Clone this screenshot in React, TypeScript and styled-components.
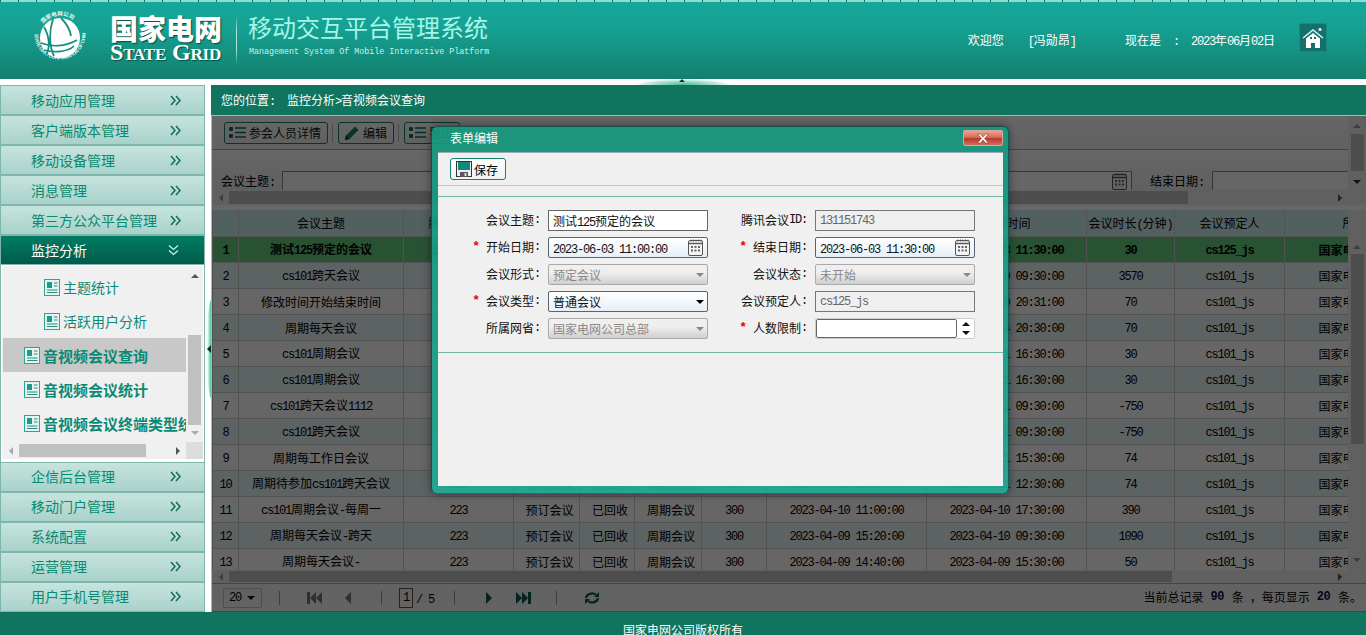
import React from "react";
import styled, { createGlobalStyle } from "styled-components";

const Global = createGlobalStyle`
  html, body { margin: 0; padding: 0; overflow: hidden; background: #fff; }
  body { font-family: "Noto Sans CJK SC", "Liberation Sans", sans-serif; font-size: 12px; color: #000; }
  * { box-sizing: border-box; }
`;

const Page = styled.div`display: flex; flex-direction: column; width: 1366px; height: 635px; overflow: hidden;`;

/* ---- text helper: half width latin runs next to CJK ---- */
const Latin = styled.span`font-family: "Liberation Mono", monospace; font-size: 1em; letter-spacing: -0.1em;`;
const Txt = ({ children }: { children: string }) => (
  <>
    {children.split(/([\x20-\x7e]+)/).filter(Boolean).map((run, i) =>
      /^[\x20-\x7e]+$/.test(run) ? <Latin key={i}>{run}</Latin> : <span key={i}>{run}</span>
    )}
  </>
);

/* ---- header ---- */
const Header = styled.header`
  position: relative; height: 79px; flex: none; display: flex; align-items: center; padding: 0 39px 0 32px; color: #fff;
  background: linear-gradient(#16a798 0%, #15a193 35%, #14806e 100%);
  &::before { content: ""; position: absolute; left: 0; right: 0; top: 0; height: 2px;
    background: repeating-linear-gradient(90deg, #0f6f66 0 1px, #8fdcd2 1px 18px); }
`;
const Brand = styled.div`display: flex; flex-direction: column; margin-left: 22px; width: 114px; margin-top: -3px;`;
const BrandCn = styled.div`font-size: 28px; line-height: 28px; font-weight: 900; white-space: nowrap; text-shadow: 1px 1px 1px #0a4a40;`;
const BrandEn = styled.div`font-family: "Liberation Serif", serif; font-weight: 700; font-size: 24px; line-height: 20px; font-variant: small-caps; white-space: nowrap; letter-spacing: -0.2px; text-shadow: 1px 1px 1px #0a4a40;`;
const Divider = styled.div`width: 1px; height: 50px; margin: 0 11px 0 12px; background: linear-gradient(transparent, #a8e6dc 30%, #a8e6dc 70%, transparent);`;
const TitleBlock = styled.div`display: flex; flex-direction: column; margin-top: -11px;`;
const Title = styled.div`font-size: 24px; line-height: 32px; font-weight: 400; color: #a6f5e6; white-space: nowrap;`;
const SubTitle = styled.div`font-family: "Liberation Mono", monospace; font-size: 8.35px; line-height: 10px; margin-top: 4px; margin-left: 1px; color: #c4f4ec; white-space: nowrap;`;
const HeaderRight = styled.div`margin-left: auto; display: flex; align-items: center;`;
const HeaderText = styled.span<{ $gap?: number }>`margin-left: ${p => p.$gap ?? 0}px; white-space: nowrap;`;
const HomeBtn = styled.div`width: 28px; height: 29px; margin-left: 24px; margin-top: -4px; border-radius: 2px; background: #14706a; border: 1px solid #1b8a80; display: flex; align-items: center; justify-content: center;`;

const TopGap = styled.div`height: 6px; flex: none; background: #fff; display: flex; justify-content: center; overflow: hidden;`;
const Notch = styled.div`position: relative; width: 96px; height: 6px; background: radial-gradient(ellipse 50% 100% at 50% 100%, #3fb98f, #bfe8da 75%, #fff 100%);
  &::after { content: ""; position: absolute; left: 44px; top: 0; border: 3px solid transparent; border-top: 0; border-bottom: 3px solid #0b3a30; }
`;

/* ---- body ---- */
const Body = styled.div`flex: 1; min-height: 0; display: flex; background: #fff;`;
const Sidebar = styled.nav`width: 205px; flex: none; display: flex; flex-direction: column;`;
const MenuItem = styled.div<{ $active?: boolean; $lower?: boolean }>`
  height: 30px; flex: none; display: flex; align-items: center; justify-content: space-between; padding: 0 23px ${p => (p.$lower ? 2 : 0)}px 30px;
  font-size: 14px; white-space: nowrap; border: 1px solid #7fb5aa;
  color: ${p => (p.$active ? "#fff" : "#078a70")};
  background: ${p => (p.$active ? "linear-gradient(#007d63, #005a4b)" : "linear-gradient(#c6e4de, #a9d2ca)")};
`;
const SubPanel = styled.div`flex: 1; min-height: 0; border: solid #7fb5aa; border-width: 0 1px; padding: 1px 1px 3px; background: #fff; display: flex;`;
const SubInner = styled.div`flex: 1; min-width: 0; background: #f0f0f0; display: grid; grid-template-columns: 184px 17px; grid-template-rows: 1fr 17px;`;
const SubList = styled.div`padding-top: 4px; overflow: hidden; min-height: 0;`;
const SubItem = styled.div<{ $level: number; $selected?: boolean }>`
  height: 34px; display: flex; align-items: center; gap: 3px; white-space: nowrap; color: #0a8a76;
  margin-left: 1px; padding-left: ${p => (p.$level === 2 ? 41 : 21)}px;
  font-size: ${p => (p.$level === 2 ? 14 : 15)}px;
  font-weight: ${p => (p.$level === 2 ? 400 : 700)};
  background: ${p => (p.$selected ? "#c8c8c8" : "transparent")};
`;
const VBarBox = styled.div<{ $outer?: boolean }>`display: flex; flex-direction: column; align-items: center; min-height: 0; background: #f0f0f0; ${p => (p.$outer ? "width: 18px; flex: none;" : "")}`;
const VThumb = styled.div<{ $start: number; $size: number }>`width: 13px; height: ${p => p.$size}px; margin-top: ${p => p.$start}px; background: #c0c0c0; flex: none;`;
const ArrowCell = styled.div<{ $size?: number }>`flex: none; width: ${p => p.$size ?? 17}px; display: flex; align-items: center; justify-content: center;`;
const VArrow = styled.div<{ $top?: number; $bottom?: number }>`flex: none; height: 13px; width: 100%; margin: ${p => p.$top ?? 0}px 0 ${p => p.$bottom ?? 0}px; display: flex; align-items: center; justify-content: center;`;
const Grow = styled.div`flex: 1;`;
const HBarBox = styled.div<{ $height: number }>`display: flex; align-items: stretch; height: ${p => p.$height}px; background: #f0f0f0; flex: none; min-width: 0;`;
const HTrack = styled.div<{ $pad?: number }>`flex: 1; display: flex; padding: ${p => p.$pad ?? 1}px 0; min-width: 0;`;
const HThumb = styled.div<{ $size: number }>`width: ${p => p.$size}px; background: #c0c0c0;`;
const Corner = styled.div`background: #dcdcdc;`;
const Tri = styled.span<{ $dir: "up" | "down" | "left" | "right"; $color?: string; $s?: number }>`
  display: inline-block; width: 0; height: 0; flex: none;
  ${p => {
    const s = p.$s ?? 4; const c = p.$color ?? "#999";
    if (p.$dir === "up") return `border-left:${s}px solid transparent;border-right:${s}px solid transparent;border-bottom:${s}px solid ${c};`;
    if (p.$dir === "down") return `border-left:${s}px solid transparent;border-right:${s}px solid transparent;border-top:${s}px solid ${c};`;
    if (p.$dir === "left") return `border-top:${s}px solid transparent;border-bottom:${s}px solid transparent;border-right:${s}px solid ${c};`;
    return `border-top:${s}px solid transparent;border-bottom:${s}px solid transparent;border-left:${s}px solid ${c};`;
  }}
`;
const Splitter = styled.div`width: 6px; flex: none; display: flex; align-items: center; justify-content: flex-end;`;
const SplitGlow = styled.div`position: relative; width: 4px; height: 98px; background: linear-gradient(90deg, #fff, #4fc69a); border-radius: 4px 0 0 4px / 50% 0 0 50%;
  &::after { content: ""; position: absolute; left: 0; top: 45px; border: 4px solid transparent; border-left: 0; border-right: 4px solid #0b2a24; }
`;

/* ---- main ---- */
const Main = styled.main`flex: 1; min-width: 0; display: flex; flex-direction: column;`;
const Crumb = styled.div`height: 30px; flex: none; background: #10745e; color: #fff; display: flex; align-items: center; padding: 0 0 1px 10px; gap: 12px;`;
const Content = styled.div`position: relative; flex: 1; min-height: 0; display: flex; flex-direction: column; border: 1px solid #8fc4b8; border-bottom-width: 0; border-right-width: 0; background: #fff; overflow: hidden;`;
const Mask = styled.div`position: absolute; inset: 0; background: rgba(0, 0, 0, 0.6);`;

const TopArea = styled.div`display: flex; flex: none; height: 74px;`;
const TopMain = styled.div`flex: 1; min-width: 0; overflow: hidden;`;
const Toolbar = styled.div`height: 34px; display: flex; align-items: center; padding: 0 0 0 12px; border-bottom: 1px solid #aaa; background: linear-gradient(#fff, #f4f4f4);`;
const ToolBtn = styled.div`height: 22px; display: flex; align-items: center; gap: 2px; padding: 0 6px 0 4px; border: 1px solid #17806c; border-radius: 3px; background: linear-gradient(#fff, #eef2f1); white-space: nowrap; color: #111;`;
const ToolSep = styled.div`width: 1px; height: 18px; margin: 0 5px 0 4px; background: #bbb;`;
const SearchRow = styled.div`height: 40px; display: flex; align-items: flex-start; padding: 21px 0 0 9px; overflow: hidden; background: linear-gradient(#fff, #f0f0f0);`;
const SearchLabel = styled.span<{ $gap?: number }>`margin: 1px 0 0 ${p => p.$gap ?? 0}px; white-space: nowrap; flex: none;`;
const SearchInput = styled.div<{ $w: number; $left?: number }>`flex: none; width: ${p => p.$w}px; height: 24px; margin-left: ${p => p.$left ?? 7}px; border: 1px solid #888; background: #fff; display: flex; justify-content: flex-end; padding: 1px 3px;`;
const GapStrip = styled.div`height: 5px; flex: none; background: #fff;`;

const GridArea = styled.div`flex: none; height: 360px; display: flex;`;
const TableClip = styled.div`flex: 1; min-width: 0; overflow: hidden;`;
const Table = styled.table`width: 1236px; table-layout: fixed; border-collapse: collapse;`;
const Th = styled.th`height: 26px; padding: 0; font-weight: 400; text-align: center; background: #d0f0ef; border: 1px solid #ccc; border-top: 0; white-space: nowrap; overflow: hidden;`;
const Tr = styled.tr<{ $kind: "hi" | "even" | "odd" }>`
  height: 26px; font-weight: ${p => (p.$kind === "hi" ? 700 : 400)};
  background: ${p => (p.$kind === "hi" ? "#66cc80" : p.$kind === "even" ? "#e8f4f8" : "#fff")};
`;
const Td = styled.td<{ $shift?: boolean }>`padding: 0 0 0 ${p => (p.$shift ? 6 : 0)}px; text-align: center; white-space: nowrap; overflow: hidden; border: 1px solid #ccc;`;

const Pager = styled.div`flex: none; height: 29px; display: flex; align-items: center; padding: 0 4px 0 11px; border-top: 1px solid #aaa; border-bottom: 1px solid #aaa; background: linear-gradient(#f4f4f4, #f8f8f8);`;
const PageSelect = styled.div`width: 39px; height: 20px; display: flex; align-items: center; justify-content: space-between; padding: 0 6px 0 5px; border: 1px solid #c0c0c0; border-radius: 2px;`;
const PageSep = styled.div<{ $left: number }>`width: 1px; height: 14px; background: #999; margin-left: ${p => p.$left}px; flex: none;`;
const PageIcon = styled.div<{ $left: number }>`margin-left: ${p => p.$left}px; flex: none; display: flex;`;
const PageBox = styled.div`width: 14px; height: 20px; margin-left: 17px; border: 1px solid #555; display: flex; align-items: center; justify-content: center; flex: none;`;
const PageOf = styled.span`margin-left: 3px; white-space: pre; flex: none;`;
const PageInfo = styled.div`margin-left: auto; white-space: pre; display: flex; align-items: center; padding-bottom: 2px;`;
const Strong = styled.b`font-family: "Liberation Mono", monospace; font-size: 12px; color: #1b0a50; letter-spacing: -0.6px; margin: 0 8px 0 7px;`;

/* ---- dialog ---- */
const Dialog = styled.div`
  position: absolute; left: 219px; top: 10px; width: 578px; height: 368px; display: flex; flex-direction: column; padding: 0 5px 7px 6px;
  border-radius: 6px; border: 1px solid rgba(20, 60, 60, .8); border-bottom-color: rgba(30, 110, 100, .9); border-right-color: rgba(20, 70, 70, .8);
  background: linear-gradient(rgba(20, 156, 128, .9), rgba(34, 170, 150, .92));
  box-shadow: 0 0 8px rgba(0, 0, 0, .45);
`;
const DialogBar = styled.div`height: 25px; flex: none; display: flex; align-items: flex-start; justify-content: space-between; padding: 0 0 0 12px; color: #fff; line-height: 22px;`;
const CloseBtn = styled.div`width: 40px; height: 16px; margin-top: 3px; display: flex; align-items: center; justify-content: center; border: 1px solid #d8a79a; border-radius: 2px; background: linear-gradient(#e9a493 0%, #d96a58 45%, #b8382a 55%, #d0705c 100%);`;
const DialogBody = styled.div`flex: 1; min-height: 0; background: #f0f0f0; border-top: 1px solid #9ab; display: flex; flex-direction: column;`;
const DialogTools = styled.div`height: 33px; flex: none; display: flex; align-items: center; padding: 0 12px; border-bottom: 1px solid #c4c4c4;`;
const SaveBtn = styled.div`height: 22px; display: flex; align-items: center; gap: 2px; padding: 0 7px 0 5px; border: 1px solid #17806c; border-radius: 3px; background: linear-gradient(#fff, #eef2f1);`;
const FormArea = styled.div`height: 157px; flex: none; margin-top: 10px; border: solid #72b8aa; border-width: 1px 0; padding-top: 13px;`;
const FormGrid = styled.div`display: grid; grid-template-columns: 102px 160px 91px 160px; column-gap: 8px; row-gap: 6px; grid-auto-rows: 21px; align-items: stretch;`;
const FieldLabel = styled.div`display: flex; align-items: center; justify-content: flex-end; padding-bottom: 2px; white-space: nowrap; color: #111;`;
const Star = styled.span`color: #e00; font-family: "Liberation Mono", monospace; font-size: 13px; font-weight: 700; margin-right: 6px;`;
const kinds = {
  text: "background:#fff;border-color:#666;color:#111;",
  readonly: "background:#efefef;border-color:#777;color:#666;",
  active: "background:linear-gradient(#fff,#e6f0f8);border-color:#5a6470;color:#111;border-radius:2px;",
  disabled: "background:linear-gradient(#efefef 40%,#cfcfcf);border-color:#aaa;color:#888;border-radius:2px;",
};
const Field = styled.div<{ $kind: keyof typeof kinds }>`
  display: flex; align-items: center; justify-content: space-between; padding: 0 3px 0 4px; border: 1px solid; white-space: nowrap; min-width: 0;
  ${p => kinds[p.$kind]}
`;
const SpinWrap = styled.div`display: flex; border: 1px solid #ccc; border-radius: 2px; background: #fff;`;
const SpinInput = styled.div`width: 141px; border: 1px solid #666; border-radius: 2px; background: #fff;`;
const SpinBtns = styled.div`flex: 1; display: flex; flex-direction: column; align-items: center; justify-content: space-between; padding: 3px 0;`;
const Footer = styled.footer`height: 23px; flex: none; background: #10745e; color: #fff; text-align: center; padding-top: 9px; line-height: 18px; overflow: hidden;`;

/* ---- icons ---- */
const ChevRight = () => (
  <svg width="11" height="11" viewBox="0 0 11 11" fill="none" stroke="#0a6a58" strokeWidth="1.4">
    <path d="M1 1l4 4.5-4 4.5M6 1l4 4.5-4 4.5" />
  </svg>
);
const ChevDown = () => (
  <svg width="11" height="12" viewBox="0 0 11 12" fill="none" stroke="#bff5e8" strokeWidth="1.3" style={{ marginRight: 2 }}>
    <path d="M1 1.5l4.5 4 4.5-4M1 6.5l4.5 4 4.5-4" />
  </svg>
);
const DocIcon = () => (
  <svg width="16" height="17" viewBox="0 0 16 17" style={{ flex: "none" }}>
    <rect x=".5" y=".5" width="15" height="16" fill="#e4f4f0" stroke="#2aa596" />
    <rect x="3" y="3" width="5" height="6" fill="#1f9a8a" />
    <path d="M10 4h3.5M10 7h3.5M3 11h10.5M3 13.5h10.5" stroke="#2a8f80" />
  </svg>
);
const ListIcon = () => (
  <svg width="18" height="14" viewBox="0 0 18 14" style={{ flex: "none" }}>
    <rect x="0" y="1" width="4" height="4" rx="1" fill="#0d6c5e" />
    <rect x="0" y="8" width="4" height="4" rx="1" fill="#0d6c5e" />
    <path d="M6 2h11M6 6.5h11M6 11h11" stroke="#0d6c5e" strokeWidth="1.4" />
  </svg>
);
const Pencil = () => (
  <svg width="18" height="16" viewBox="0 0 18 16" style={{ flex: "none" }}>
    <path d="M2 15l1-4.5L12 1.5l3.5 3.5-9 9z" fill="#17806c" />
    <path d="M2 15l1-4.5 3.5 3.5z" fill="#0a3a30" />
  </svg>
);
const Floppy = () => (
  <svg width="16" height="16" viewBox="0 0 16 16" style={{ flex: "none" }}>
    <rect x=".5" y=".5" width="15" height="15" fill="#e8eeee" stroke="#333" />
    <rect x="2" y="1" width="12" height="8" fill="#12877a" />
    <rect x="4" y="11" width="8" height="5" fill="#556" />
    <rect x="8.5" y="12" width="2" height="3" fill="#ddd" />
  </svg>
);
const Calendar = () => (
  <svg width="16" height="18" viewBox="0 0 16 18" style={{ flex: "none" }}>
    <rect x=".5" y="1.5" width="14" height="15" rx="1.5" fill="#f4f4f4" stroke="#555" />
    <path d="M1 4.5h13" stroke="#555" strokeWidth="1.4" />
    <path d="M3 .5v2M5.5 .5v2M8 .5v2M10.5 .5v2M13 .5v2" stroke="#555" />
    <path d="M3 7h2v2H3zM6.5 7h2v2h-2zM10 7h2v2h-2zM3 10.5h2v2H3zM6.5 10.5h2v2h-2zM10 10.5h2v2h-2z" fill="#666" />
  </svg>
);
const XIcon = () => (
  <svg width="14" height="11" viewBox="0 0 12 10"><path d="M1 1h2.6L6 3.6 8.4 1H11L7.4 5 11 9H8.4L6 6.4 3.6 9H1l3.6-4z" fill="#fff" stroke="#8a2c20" strokeWidth=".5" /></svg>
);
const HomeIcon = () => (
  <svg width="22" height="22" viewBox="0 0 22 22">
    <path d="M1 11L11 3l10 8" fill="none" stroke="#d8f2ee" strokeWidth="1.6" />
    <circle cx="18" cy="2.5" r="1.5" fill="#fff" />
    <path d="M4 11.5L11 6l7 5.5V21h-5v-5H9v5H4z" fill="#fff" />
    <path d="M8 10h2v2H8zM12 10h2v2h-2z" fill="#14706a" />
  </svg>
);
const Globe = () => (
  <svg width="56" height="52" viewBox="0 0 56 52" style={{ flex: "none", overflow: "visible", marginTop: -3 }}>
    <defs>
      <path id="ringTop" d="M8.5 16A21.5 21.5 0 0 1 47.5 16" />
      <path id="ringBottom" d="M2.5 22A25.5 25.5 0 0 0 53.5 22" />
    </defs>
    <text fill="#e6f7f3" fontSize="5.5" fontWeight="700">
      <textPath href="#ringTop" startOffset="5">国家电网公司</textPath>
    </text>
    <text fill="#e6f7f3" fontSize="4.8" fontWeight="700" fontFamily="Liberation Sans, sans-serif">
      <textPath href="#ringBottom" textLength="84">STATE GRID CORPORATION OF CHINA</textPath>
    </text>
    <circle cx="28" cy="26" r="20" fill="#fff" />
    <path d="M12 15c6 10 6 22 2 28M21 7c-4 12-4 27 1 37M29 6c4 4 9 11 10 18" fill="none" stroke="#12907e" strokeWidth="1.8" />
    <path d="M9 31c10 4 24 4 36-3M12 38c10 3 24 2 30-4" fill="none" stroke="#12907e" strokeWidth="1.6" />
  </svg>
);
const SkipIcon = ({ dir, color }: { dir: "l" | "r"; color: string }) => (
  <svg width="15" height="12" viewBox="0 0 15 12" fill={color}>
    {dir === "l" ? <path d="M0 0h3v12H0zM9 0v12L3 6zM15 0v12L9 6z" /> : <path d="M15 0h-3v12h3zM6 0v12l6-6zM0 0v12l6-6z" />}
  </svg>
);
const Refresh = () => (
  <svg width="16" height="14" viewBox="0 0 16 14" fill="none" stroke="#0d5a50" strokeWidth="2.2">
    <path d="M2 7a6 5 0 0 1 10-3.2M14 7a6 5 0 0 1-10 3.2" />
    <path d="M15 1v5h-5zM1 13V8h5z" fill="#0d5a50" stroke="none" />
  </svg>
);

/* ---- data ---- */
const menuTop = ["移动应用管理", "客户端版本管理", "移动设备管理", "消息管理", "第三方公众平台管理"];
const menuBottom = ["企信后台管理", "移动门户管理", "系统配置", "运营管理", "用户手机号管理"];
const subItems = [
  { t: "主题统计", l: 2 }, { t: "活跃用户分析", l: 2 },
  { t: "音视频会议查询", l: 1, s: true }, { t: "音视频会议统计", l: 1 }, { t: "音视频会议终端类型统计", l: 1 },
];
const cols = [26, 165, 110, 66, 55, 67, 65, 160, 160, 88, 110, 164];
const heads = ["", "会议主题", "腾讯会议ID", "会议形式", "会议状态", "会议类型", "人数限制", "开始时间", "结束时间", "会议时长(分钟)", "会议预定人", "所属网省"];
const rows: [string, string, string, string, string, string][] = [
  ["测试125预定的会议", "131151743", "2023-06-03 11:00:00", "2023-06-03 11:30:00", "30", "cs125_js"],
  ["cs101跨天会议", "223", "2023-04-17 00:00:00", "2023-04-19 09:30:00", "3570", "cs101_js"],
  ["修改时间开始结束时间", "223", "2023-04-20 19:21:00", "2023-04-20 20:31:00", "70", "cs101_js"],
  ["周期每天会议", "223", "2023-04-14 19:20:00", "2023-04-14 20:30:00", "70", "cs101_js"],
  ["cs101周期会议", "223", "2023-04-11 16:00:00", "2023-04-11 16:30:00", "30", "cs101_js"],
  ["cs101周期会议", "223", "2023-04-11 16:00:00", "2023-04-11 16:30:00", "30", "cs101_js"],
  ["cs101跨天会议1112", "223", "2023-04-11 22:00:00", "2023-04-11 09:30:00", "-750", "cs101_js"],
  ["cs101跨天会议", "223", "2023-04-11 22:00:00", "2023-04-11 09:30:00", "-750", "cs101_js"],
  ["周期每工作日会议", "223", "2023-04-11 14:16:00", "2023-04-11 15:30:00", "74", "cs101_js"],
  ["周期待参加cs101跨天会议", "223", "2023-04-11 11:16:00", "2023-04-11 12:30:00", "74", "cs101_js"],
  ["cs101周期会议-每周一", "223", "2023-04-10 11:00:00", "2023-04-10 17:30:00", "390", "cs101_js"],
  ["周期每天会议-跨天", "223", "2023-04-09 15:20:00", "2023-04-10 09:30:00", "1090", "cs101_js"],
  ["周期每天会议-", "223", "2023-04-09 14:40:00", "2023-04-09 15:30:00", "50", "cs101_js"],
];

const HBar = ({ height, thumb, corner }: { height: number; thumb: number; corner: number }) => (
  <HBarBox $height={height}>
    <ArrowCell><Tri $dir="left" $color="#999" /></ArrowCell>
    <HTrack><HThumb $size={thumb} /></HTrack>
    <ArrowCell><Tri $dir="right" $color="#555" /></ArrowCell>
    <ArrowCell $size={corner} />
  </HBarBox>
);

export default function App() {
  return (
    <Page>
      <Global />
      <Header>
        <Globe />
        <Brand>
          <BrandCn>国家电网</BrandCn>
          <BrandEn>State Grid</BrandEn>
        </Brand>
        <Divider />
        <TitleBlock>
          <Title>移动交互平台管理系统</Title>
          <SubTitle>Management System Of Mobile Interactive Platform</SubTitle>
        </TitleBlock>
        <HeaderRight>
          <HeaderText>欢迎您</HeaderText>
          <HeaderText $gap={24}><Txt>[冯勋昂]</Txt></HeaderText>
          <HeaderText $gap={49}>现在是</HeaderText>
          <HeaderText $gap={12}><Txt>:</Txt></HeaderText>
          <HeaderText $gap={12}><Txt>2023年06月02日</Txt></HeaderText>
          <HomeBtn><HomeIcon /></HomeBtn>
        </HeaderRight>
      </Header>
      <TopGap><Notch /></TopGap>
      <Body>
        <Sidebar>
          {menuTop.map(m => <MenuItem key={m}>{m}<ChevRight /></MenuItem>)}
          <MenuItem $active>监控分析<ChevDown /></MenuItem>
          <SubPanel>
            <SubInner>
              <SubList>
                {subItems.map(s => (
                  <SubItem key={s.t} $level={s.l} $selected={s.s}><DocIcon />{s.t}</SubItem>
                ))}
              </SubList>
              <VBarBox>
                <VArrow $top={3}><Tri $dir="up" $color="#555" /></VArrow>
                <VThumb $start={53} $size={90} />
                <Grow />
                <VArrow $bottom={3}><Tri $dir="down" $color="#aaa" /></VArrow>
              </VBarBox>
              <HBarBox $height={17}>
                <ArrowCell><Tri $dir="left" $color="#aaa" /></ArrowCell>
                <HTrack $pad={2}><HThumb $size={127} /></HTrack>
                <ArrowCell><Tri $dir="right" $color="#555" /></ArrowCell>
              </HBarBox>
              <Corner />
            </SubInner>
          </SubPanel>
          {menuBottom.map(m => <MenuItem key={m} $lower>{m}<ChevRight /></MenuItem>)}
        </Sidebar>
        <Splitter><SplitGlow /></Splitter>
        <Main>
          <Crumb><span><Txt>您的位置:</Txt></span><span><Txt>监控分析&gt;音视频会议查询</Txt></span></Crumb>
          <Content>
            <TopArea>
              <TopMain>
                <Toolbar>
                  <ToolBtn><ListIcon />参会人员详情</ToolBtn>
                  <ToolSep />
                  <ToolBtn><Pencil />编辑</ToolBtn>
                  <ToolSep />
                  <ToolBtn><ListIcon />导出</ToolBtn>
                </Toolbar>
                <SearchRow>
                  <SearchLabel><Txt>会议主题:</Txt></SearchLabel>
                  <SearchInput $w={300} />
                  <SearchLabel $gap={40}><Txt>开始日期:</Txt></SearchLabel>
                  <SearchInput $w={449}><Calendar /></SearchInput>
                  <SearchLabel $gap={18}><Txt>结束日期:</Txt></SearchLabel>
                  <SearchInput $w={160} $left={8}><Calendar /></SearchInput>
                </SearchRow>
              </TopMain>
              <VBarBox $outer>
                <VArrow $top={3}><Tri $dir="up" /></VArrow>
                <VThumb $start={2} $size={37} />
                <Grow />
                <VArrow $bottom={2}><Tri $dir="down" $color="#333" /></VArrow>
              </VBarBox>
            </TopArea>
            <HBar height={15} thumb={959} corner={18} />
            <GapStrip />
            <GridArea>
              <TableClip>
                <Table>
                  <colgroup>{cols.map((c, i) => <col key={i} width={c} />)}</colgroup>
                  <thead>
                    <tr>{heads.map((h, i) => <Th key={i}><Txt>{h}</Txt></Th>)}</tr>
                  </thead>
                  <tbody>
                    {rows.map((r, i) => (
                      <Tr key={i} $kind={i === 0 ? "hi" : i % 2 === 1 ? "even" : "odd"}>
                        <Td><Txt>{String(i + 1)}</Txt></Td>
                        <Td><Txt>{r[0]}</Txt></Td>
                        <Td><Txt>{r[1]}</Txt></Td>
                        <Td $shift>预订会议</Td>
                        <Td $shift>已回收</Td>
                        <Td $shift>周期会议</Td>
                        <Td><Txt>300</Txt></Td>
                        <Td><Txt>{r[2]}</Txt></Td>
                        <Td><Txt>{r[3]}</Txt></Td>
                        <Td><Txt>{r[4]}</Txt></Td>
                        <Td><Txt>{r[5]}</Txt></Td>
                        <Td>国家电网公司总部</Td>
                      </Tr>
                    ))}
                  </tbody>
                </Table>
              </TableClip>
              <VBarBox $outer>
                <VArrow $top={30}><Tri $dir="up" /></VArrow>
                <VThumb $start={1} $size={190} />
                <Grow />
                <VArrow $bottom={4}><Tri $dir="down" /></VArrow>
              </VBarBox>
            </GridArea>
            <HBar height={13} thumb={943} corner={18} />
            <Pager>
              <PageSelect><Txt>20</Txt><Tri $dir="down" $color="#111" /></PageSelect>
              <PageSep $left={17} />
              <PageIcon $left={27}><SkipIcon dir="l" color="#777" /></PageIcon>
              <PageIcon $left={23}><Tri $dir="left" $color="#777" $s={6} /></PageIcon>
              <PageSep $left={30} />
              <PageBox><Txt>1</Txt></PageBox>
              <PageOf><Txt>/ 5</Txt></PageOf>
              <PageSep $left={20} />
              <PageIcon $left={31}><Tri $dir="right" $color="#0d5a50" $s={6} /></PageIcon>
              <PageIcon $left={24}><SkipIcon dir="r" color="#0d5a50" /></PageIcon>
              <PageSep $left={25} />
              <PageIcon $left={27}><Refresh /></PageIcon>
              <PageInfo>
                当前总记录<Strong>90</Strong><span><Txt>条 ，每页显示</Txt></span><Strong>20</Strong>条。
              </PageInfo>
            </Pager>
            <Mask />
            <Dialog>
              <DialogBar>表单编辑<CloseBtn><XIcon /></CloseBtn></DialogBar>
              <DialogBody>
                <DialogTools><SaveBtn><Floppy />保存</SaveBtn></DialogTools>
                <FormArea>
                  <FormGrid>
                    <FieldLabel><Txt>会议主题:</Txt></FieldLabel>
                    <Field $kind="text"><span><Txt>测试125预定的会议</Txt></span></Field>
                    <FieldLabel><Txt>腾讯会议ID:</Txt></FieldLabel>
                    <Field $kind="readonly"><Txt>131151743</Txt></Field>

                    <FieldLabel><Star>*</Star><Txt>开始日期:</Txt></FieldLabel>
                    <Field $kind="active"><span><Txt>2023-06-03 11:00:00</Txt></span><Calendar /></Field>
                    <FieldLabel><Star>*</Star><Txt>结束日期:</Txt></FieldLabel>
                    <Field $kind="active"><span><Txt>2023-06-03 11:30:00</Txt></span><Calendar /></Field>

                    <FieldLabel><Txt>会议形式:</Txt></FieldLabel>
                    <Field $kind="disabled">预定会议<Tri $dir="down" $color="#888" /></Field>
                    <FieldLabel><Txt>会议状态:</Txt></FieldLabel>
                    <Field $kind="disabled">未开始<Tri $dir="down" $color="#888" /></Field>

                    <FieldLabel><Star>*</Star><Txt>会议类型:</Txt></FieldLabel>
                    <Field $kind="active">普通会议<Tri $dir="down" $color="#000" /></Field>
                    <FieldLabel><Txt>会议预定人:</Txt></FieldLabel>
                    <Field $kind="readonly"><Txt>cs125_js</Txt></Field>

                    <FieldLabel><Txt>所属网省:</Txt></FieldLabel>
                    <Field $kind="disabled">国家电网公司总部<Tri $dir="down" $color="#888" /></Field>
                    <FieldLabel><Star>*</Star><Txt>人数限制:</Txt></FieldLabel>
                    <SpinWrap>
                      <SpinInput />
                      <SpinBtns><Tri $dir="up" $color="#111" /><Tri $dir="down" $color="#111" /></SpinBtns>
                    </SpinWrap>
                  </FormGrid>
                </FormArea>
              </DialogBody>
            </Dialog>
          </Content>
        </Main>
      </Body>
      <Footer>国家电网公司版权所有</Footer>
    </Page>
  );
}
